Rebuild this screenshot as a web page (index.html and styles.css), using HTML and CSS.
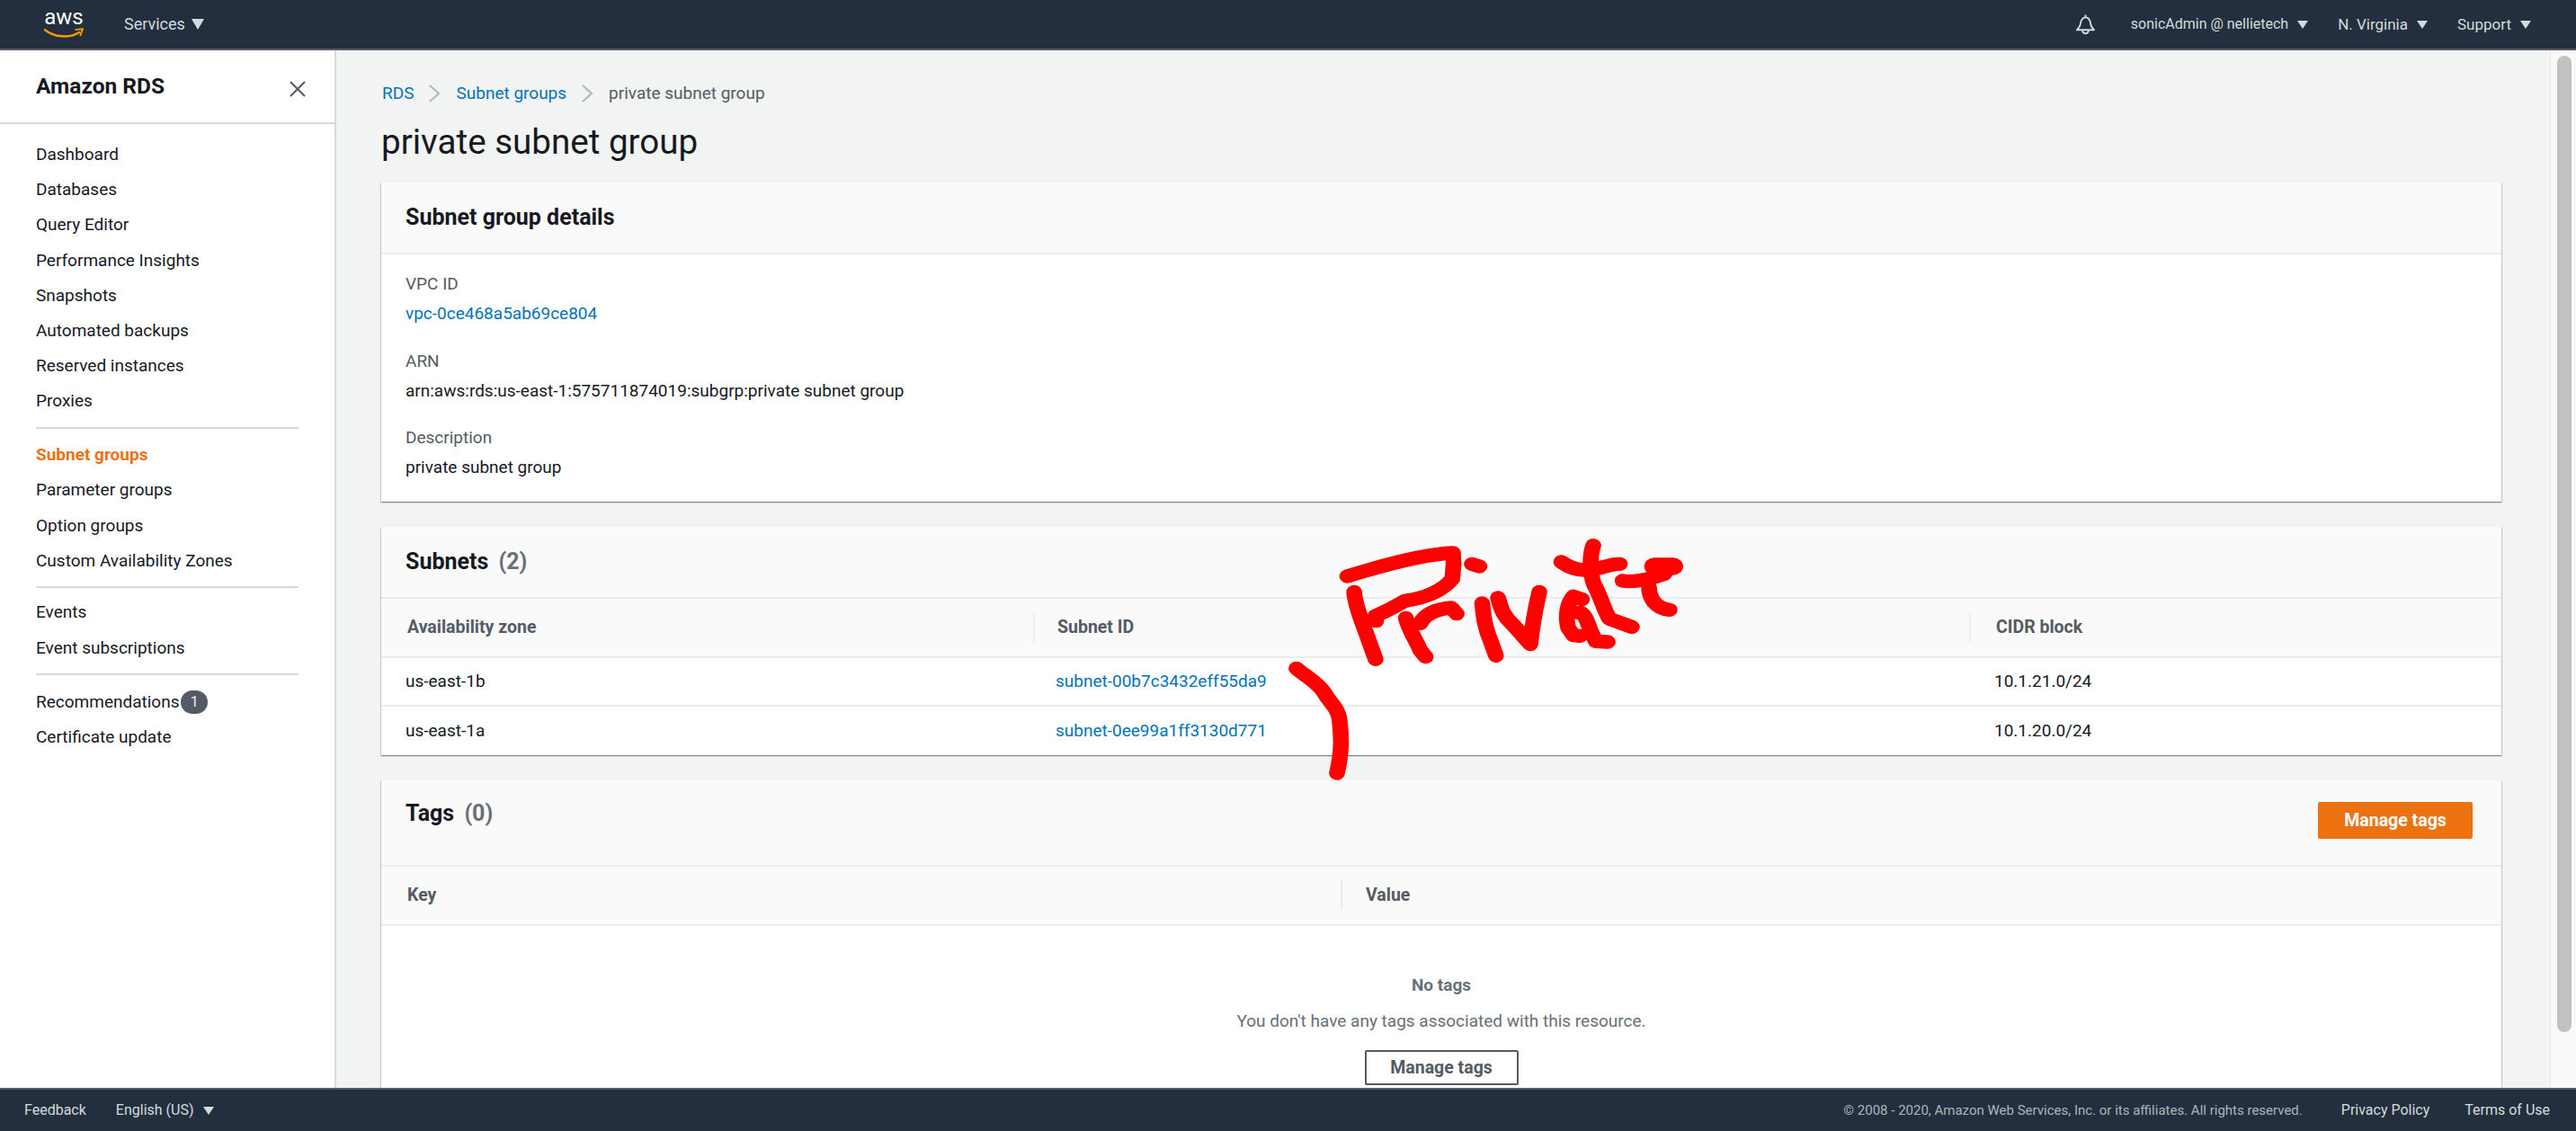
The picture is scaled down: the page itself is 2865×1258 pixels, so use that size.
FILE: index.html
```html
<!DOCTYPE html>
<html lang="en">
<head>
  <meta charset="UTF-8">
  <title>private subnet group</title>
  <link rel="stylesheet" href="styles.css">
</head>
<body>

  <header class="topbar">
    <a class="logo">
      <span class="logo-text">aws</span>
      <svg class="logo-smile" viewBox="0 0 46 12"><path d="M1 2 C12 11 30 12 41 5" fill="none" stroke="#f90" stroke-width="2.6" stroke-linecap="round"/><path d="M36 2 L45 1 L42 9" fill="none" stroke="#f90" stroke-width="2" stroke-linejoin="round"/></svg>
    </a>
    <a class="services">Services</a>
    <span class="caret caret-big"></span>
    <div class="topbar-right">
      <svg class="bell" viewBox="0 0 24 24"><path d="M12 1 V4 M12 4 C7.5 4 6.5 8 6 12 C5.6 15 3.5 16.5 2 18.5 H22 C20.5 16.5 18.4 15 18 12 C17.5 8 16.5 4 12 4 Z M8.5 18.5 C8.5 24 15.5 24 15.5 18.5" fill="none" stroke="#d5dbdb" stroke-width="2" stroke-linejoin="round"/></svg>
      <a class="top-link user">sonicAdmin @ nellietech</a><span class="caret"></span>
      <a class="top-link region">N. Virginia</a><span class="caret"></span>
      <a class="top-link support">Support</a><span class="caret"></span>
    </div>
  </header>

  <div class="middle">
    <nav class="sidebar">
      <div class="sidebar-head">
        <h2>Amazon RDS</h2>
        <svg class="close" viewBox="0 0 18 18"><path d="M1 1 L17 17 M17 1 L1 17" stroke="#545b64" stroke-width="2" fill="none"/></svg>
      </div>
      <ul class="nav-list first">
        <li>Dashboard</li>
        <li>Databases</li>
        <li>Query Editor</li>
        <li>Performance Insights</li>
        <li>Snapshots</li>
        <li>Automated backups</li>
        <li>Reserved instances</li>
        <li>Proxies</li>
      </ul>
      <ul class="nav-list">
        <li class="active">Subnet groups</li>
        <li>Parameter groups</li>
        <li>Option groups</li>
        <li>Custom Availability Zones</li>
      </ul>
      <ul class="nav-list events">
        <li>Events</li>
        <li>Event subscriptions</li>
      </ul>
      <ul class="nav-list last">
        <li>Recommendations <span class="badge">1</span></li>
        <li>Certificate update</li>
      </ul>
    </nav>

    <main class="content">
      <div class="breadcrumbs">
        <a>RDS</a>
        <svg class="chevron" viewBox="0 0 13 20"><path d="M1 1 L11 10 L1 19" fill="none" stroke="#aab7b8" stroke-width="2"/></svg>
        <a>Subnet groups</a>
        <svg class="chevron" viewBox="0 0 13 20"><path d="M1 1 L11 10 L1 19" fill="none" stroke="#aab7b8" stroke-width="2"/></svg>
        <span>private subnet group</span>
      </div>
      <h1>private subnet group</h1>

      <section class="card">
        <div class="card-head"><h3>Subnet group details</h3></div>
        <div class="details">
          <div class="label">VPC ID</div>
          <div class="value"><a>vpc-0ce468a5ab69ce804</a></div>
          <div class="label">ARN</div>
          <div class="value">arn:aws:rds:us-east-1:575711874019:subgrp:private subnet group</div>
          <div class="label">Description</div>
          <div class="value">private subnet group</div>
        </div>
      </section>

      <section class="card subnets">
        <div class="card-head"><h3>Subnets <span class="count">(2)</span></h3></div>
        <table class="grid">
          <thead>
            <tr>
              <th class="col-zone"><div>Availability zone</div></th>
              <th class="col-id"><div>Subnet ID</div></th>
              <th><div>CIDR block</div></th>
            </tr>
          </thead>
          <tbody>
            <tr><td>us-east-1b</td><td class="cell-id"><a>subnet-00b7c3432eff55da9</a></td><td>10.1.21.0/24</td></tr>
            <tr><td>us-east-1a</td><td class="cell-id"><a>subnet-0ee99a1ff3130d771</a></td><td>10.1.20.0/24</td></tr>
          </tbody>
        </table>
      </section>

      <section class="card tags">
        <div class="card-head tags-head">
          <h3>Tags <span class="count">(0)</span></h3>
          <button class="btn-primary">Manage tags</button>
        </div>
        <table class="grid">
          <thead>
            <tr>
              <th class="col-key"><div>Key</div></th>
              <th class="col-value"><div>Value</div></th>
            </tr>
          </thead>
        </table>
        <div class="empty">
          <strong>No tags</strong>
          <p>You don't have any tags associated with this resource.</p>
          <button class="btn-normal">Manage tags</button>
        </div>
      </section>
    </main>

    <div class="scrollbar"><div class="thumb"></div></div>
  </div>

  <footer class="footer">
    <a class="feedback">Feedback</a>
    <a class="lang">English (US)</a><span class="caret"></span>
    <div class="footer-right">
      <span class="copyright">© 2008 - 2020, Amazon Web Services, Inc. or its affiliates. All rights reserved.</span>
      <a class="privacy">Privacy Policy</a>
      <a class="terms">Terms of Use</a>
    </div>
  </footer>

  <!-- red marker scribble drawn over the page -->
  <svg class="scribble" viewBox="0 0 1568 960" preserveAspectRatio="none">
    <g fill="none" stroke="#fe0000" stroke-width="46" stroke-linecap="round" stroke-linejoin="round">
      <path d="M388 213 C480 180 600 140 695 135 L697 170 L693 222 Q650 280 555 295 Q510 325 470 345 L472 362"/>
      <path d="M408 265 C410 310 430 360 445 410 L470 490"/>
      <path d="M750 172 L772 180"/>
      <path d="M558 352 C570 400 590 430 600 460 L616 482"/>
      <path d="M600 370 Q620 325 690 318 L706 338"/>
      <path d="M780 303 C785 360 790 390 805 430 L820 478"/>
      <path d="M826 285 C835 320 840 345 870 375 L920 440 C925 380 935 320 946 265"/>
      <path d="M1070 290 L1045 280 C1030 300 1020 340 1030 385 L1045 410 L1065 412"/>
      <path d="M1060 335 C1075 330 1085 360 1095 395 L1110 430 L1145 432"/>
      <path d="M1010 165 C1040 190 1070 195 1095 190 C1125 190 1150 170 1180 172"/>
      <path d="M1103 110 C1090 150 1095 210 1105 240 C1125 280 1135 330 1150 355 L1215 382"/>
      <path d="M1188 228 C1220 235 1260 225 1310 205"/>
      <path d="M1280 180 L1335 180" stroke-width="58"/>
      <path d="M1265 250 C1265 280 1280 320 1325 325"/>
      <path d="M240 520 C270 550 300 565 320 600 C340 640 360 650 365 690 C372 750 372 800 358 870"/>
    </g>
  </svg>

</body>
</html>
```

FILE: styles.css
```css
* {
  box-sizing: border-box;
}

html, body {
  height: 100%;
}

body {
  margin: 0;
  display: flex;
  flex-direction: column;
  overflow: hidden;
  background: #f2f3f3;
  color: #16191f;
  font-family: Roboto, "Noto Sans", sans-serif;
  font-size: 19px;
  line-height: 24px;
}

a {
  color: #0073bb;
  text-decoration: none;
}

h1, h2, h3, p, ul {
  margin: 0;
  padding: 0;
}

/* top bar */
.topbar {
  height: 56px;
  flex: none;
  display: flex;
  align-items: center;
  padding-left: 49px;
  background: #232f3e;
  border-bottom: 2px solid #545b64;
  color: #d5dbdb;
  font-size: 17px;
}

.logo {
  width: 44px;
  height: 36px;
  display: flex;
  flex-direction: column;
  align-items: center;
  margin-top: -2px;
}

.logo-text {
  color: #fff;
  font-size: 24px;
  line-height: 22px;
}

.logo-smile {
  width: 44px;
  height: 12px;
  margin-top: 1px;
}

.services {
  margin-left: 45px;
  color: #d5dbdb;
  font-size: 18px;
}

.caret {
  display: inline-block;
  width: 0;
  height: 0;
  margin-left: 10px;
  border-left: 6px solid transparent;
  border-right: 6px solid transparent;
  border-top: 9px solid #d5dbdb;
}

.caret-big {
  margin-left: 7px;
  border-left-width: 7px;
  border-right-width: 7px;
  border-top-width: 12px;
}

.topbar-right {
  margin-left: auto;
  margin-right: 50px;
  display: flex;
  align-items: center;
}

.bell {
  width: 23px;
  height: 24px;
  margin-right: 39px;
}

.top-link {
  color: #d5dbdb;
}

.user {
  font-size: 16px;
}

.region, .support {
  margin-left: 33px;
}

/* sidebar and content */
.middle {
  flex: 1;
  min-height: 0;
  display: flex;
}

.sidebar {
  width: 374px;
  flex: none;
  background: #fff;
  border-right: 2px solid #d5dbdb;
}

.sidebar-head {
  height: 82px;
  display: flex;
  align-items: center;
  justify-content: space-between;
  padding: 0 32px 0 40px;
  border-bottom: 2px solid #d5dbdb;
}

.sidebar-head h2 {
  font-size: 24.5px;
  font-weight: 700;
}

.close {
  width: 18px;
  height: 18px;
  margin-top: 6px;
}

.nav-list {
  list-style: none;
  margin: 0 40px;
  padding: 9.4px 0;
  border-bottom: 2px solid #d5dbdb;
}

.nav-list.first {
  padding-top: 14px;
}

.nav-list.events {
  padding-top: 7px;
}

.nav-list.last {
  border-bottom: none;
}

.nav-list li {
  height: 39.2px;
  line-height: 39px;
  white-space: nowrap;
}

.nav-list .active {
  color: #ec7211;
  font-weight: 700;
}

.badge {
  display: inline-block;
  width: 30px;
  height: 26px;
  line-height: 26px;
  margin-left: -3px;
  border-radius: 13px;
  background: #545b64;
  color: #eaeded;
  text-align: center;
  font-size: 16px;
  vertical-align: 1px;
}

.content {
  flex: 1;
  min-width: 0;
  overflow: hidden;
  padding: 36px 54px 0 50px;
}

.breadcrumbs {
  display: flex;
  align-items: center;
  height: 24px;
  padding-left: 1px;
  color: #545b64;
}

.chevron {
  width: 13px;
  height: 20px;
  margin: 0 17px;
}

.content h1 {
  margin: 18px 0 21px;
  font-size: 38.6px;
  line-height: 48px;
  font-weight: 400;
}

.card {
  background: #fff;
  box-shadow: 0 1px 1px 0 rgba(0, 28, 36, 0.3), 1px 1px 1px 0 rgba(0, 28, 36, 0.15), -1px 1px 1px 0 rgba(0, 28, 36, 0.15);
}

.card-head {
  height: 80px;
  display: flex;
  align-items: center;
  padding: 0 27px;
  background: #fafafa;
  border-bottom: 2px solid #eaeded;
}

.card-head h3 {
  font-size: 25px;
  font-weight: 700;
  margin-top: -1px;
}

.count {
  margin-left: 5px;
  color: #687078;
  font-weight: 700;
}

.details {
  padding: 21px 27px 26px;
}

.label {
  color: #545b64;
}

.value {
  margin: 9px 0 28.5px;
}

.value:last-child {
  margin-bottom: 0;
}

.subnets {
  margin-top: 28px;
}

.grid {
  width: 100%;
  border-collapse: separate;
  border-spacing: 0;
  table-layout: fixed;
}

.grid th {
  height: 66px;
  padding: 0;
  background: #fafafa;
  border-bottom: 2px solid #eaeded;
  color: #545b64;
  text-align: left;
  font-weight: 700;
  font-size: 19.5px;
}

.grid th div {
  height: 32px;
  line-height: 32px;
  padding-left: 28px;
  border-left: 2px solid #eaeded;
}

.grid th:first-child div {
  padding-left: 29px;
  border-left: none;
}

.grid .col-id div {
  padding-left: 25px;
}

.grid .col-value div {
  padding-left: 26px;
}

.col-zone {
  width: 725px;
}

.col-id {
  width: 1041px;
}

.col-key {
  width: 1067px;
}

.grid td {
  height: 54px;
  padding: 0 0 0 28px;
  border-bottom: 2px solid #eaeded;
}

.grid td:first-child {
  padding-left: 27px;
}

.grid .cell-id {
  padding-left: 25px;
}

.grid tr:last-child td {
  border-bottom: none;
}

.tags {
  margin-top: 28px;
}

.tags-head {
  height: 96px;
  align-items: flex-start;
  justify-content: space-between;
  padding: 24px 32px 0 27px;
}

.tags-head h3 {
  margin-top: 1px;
}

.btn-primary {
  width: 172px;
  height: 41px;
  background: #ec7211;
  border: 1px solid #ec7211;
  border-radius: 2px;
  color: #fff;
  font: 700 19.5px Roboto, "Noto Sans", sans-serif;
}

.empty {
  display: flex;
  flex-direction: column;
  align-items: center;
  padding: 54px 0 40px;
  color: #687078;
}

.empty p {
  margin-top: 16px;
}

.btn-normal {
  width: 171px;
  height: 39px;
  margin-top: 20px;
  background: #fff;
  border: 2px solid #545b64;
  border-radius: 2px;
  color: #545b64;
  font: 700 19.5px Roboto, "Noto Sans", sans-serif;
}

.scrollbar {
  width: 29px;
  flex: none;
  padding: 6px 7px 0;
  background: #f9f9f9;
  border-left: 1px solid #e8e8e8;
}

.thumb {
  width: 16px;
  height: 1086px;
  border-radius: 8px;
  background: #c1c1c1;
}

/* footer */
.footer {
  height: 48px;
  flex: none;
  position: relative;
  display: flex;
  align-items: center;
  padding-left: 27px;
  background: #232f3e;
  border-top: 2px solid #545b64;
  color: #d5dbdb;
  font-size: 16px;
}

.footer a {
  color: #d5dbdb;
}

.lang {
  margin-left: 33px;
}

.footer-right {
  margin-left: auto;
  margin-right: 29px;
  display: flex;
  align-items: center;
}

.copyright {
  color: #aab7b8;
  font-size: 15px;
}

.privacy {
  margin-left: 43px;
}

.terms {
  margin-left: 39px;
}

.scribble {
  position: absolute;
  left: 1350px;
  top: 570px;
  width: 600px;
  height: 320px;
}
```
